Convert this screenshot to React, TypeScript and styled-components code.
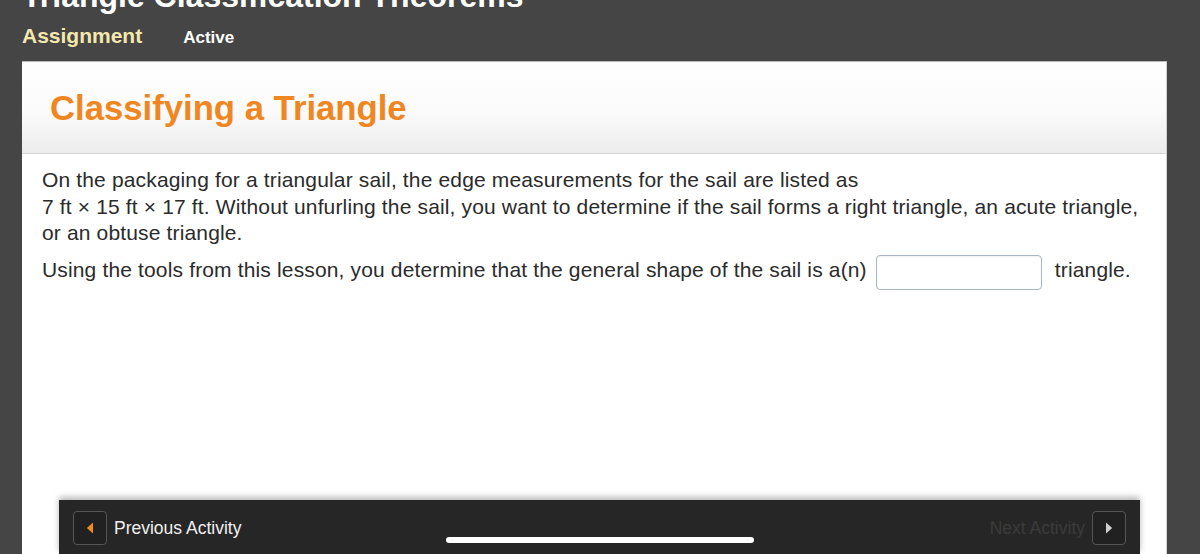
import React from "react";
import styled, { createGlobalStyle } from "styled-components";

const Global = createGlobalStyle`
  html, body { margin: 0; padding: 0; background: #454545; overflow: hidden; }
  body { font-family: "Liberation Sans", Arial, Helvetica, sans-serif; }
`;

const Page = styled.div`
  height: 100vh;
  display: flex;
  flex-direction: column;
  padding: 0 33px 0 22px;
  box-sizing: border-box;
  overflow: hidden;
`;

const PageTitle = styled.h1`
  margin: -22px 0 0 0;
  font-size: 32px;
  line-height: 36px;
  font-weight: 700;
  color: #ffffff;
  white-space: nowrap;
`;

const NavRow = styled.div`
  display: flex;
  align-items: baseline;
  gap: 41px;
  margin-top: 9px;
  height: 26px;
  margin-bottom: 12px;
`;

const NavItem = styled.span<{ $primary?: boolean }>`
  font-weight: 700;
  font-size: ${(p) => (p.$primary ? "21px" : "17px")};
  line-height: 26px;
  color: ${(p) => (p.$primary ? "#f4e8ad" : "#ffffff")};
`;

const Card = styled.section`
  flex: 1;
  display: flex;
  flex-direction: column;
  background: #ffffff;
  border-top: 1px solid #b9b9b9;
  border-right: 1px solid #d0d0d0;
  min-height: 0;
`;

const CardHeader = styled.header`
  height: 91px;
  display: flex;
  align-items: center;
  padding: 0 28px;
  background: linear-gradient(to bottom, #ffffff 0%, #fbfbfb 55%, #ececec 100%);
  border-bottom: 1px solid #d6d6d6;
  flex-shrink: 0;
`;

const CardTitle = styled.h2`
  margin: 0;
  font-size: 34.7px;
  font-weight: 700;
  color: #f0861f;
  line-height: 40px;
`;

const CardBody = styled.div`
  flex: 1;
  padding: 13px 20px 0 20px;
  color: #2b2b2b;
  font-size: 21px;
  letter-spacing: 0.15px;
  line-height: 26.5px;
`;

const Para = styled.p`
  margin: 0 0 7px 0;
`;

const AnswerBox = styled.input`
  box-sizing: border-box;
  width: 166px;
  height: 35px;
  margin: 0 13px 0 9px;
  vertical-align: middle;
  border: 1px solid #a9b6c4;
  border-radius: 4px;
  background: #ffffff;
  box-shadow: inset 0 1px 2px rgba(0, 0, 0, 0.06);
  position: relative;
  top: 1px;
`;

const BottomBar = styled.nav`
  height: 54px;
  margin: 0 26px 0 37px;
  background: #262626;
  box-shadow: 0 -3px 6px rgba(0, 0, 0, 0.28);
  display: flex;
  align-items: center;
  justify-content: space-between;
  padding: 2px 14px 0 14px;
  box-sizing: border-box;
  flex-shrink: 0;
  position: relative;
`;

const NavGroup = styled.div`
  display: flex;
  align-items: center;
  gap: 7px;
`;

const ArrowButton = styled.span`
  box-sizing: border-box;
  width: 34px;
  height: 34px;
  border: 1px solid #555555;
  border-radius: 4px;
  background: #212121;
  display: flex;
  align-items: center;
  justify-content: center;
`;

const NavLabel = styled.span<{ $dim?: boolean }>`
  font-size: 17.5px;
  color: ${(p) => (p.$dim ? "#3b3b3b" : "#f0f0f0")};
`;

const HomeIndicator = styled.div`
  position: absolute;
  left: 387px;
  bottom: 11px;
  width: 308px;
  height: 6px;
  border-radius: 3px;
  background: #ffffff;
`;

export default function App() {
  return (
    <>
      <Global />
      <Page>
        <PageTitle>Triangle Classification Theorems</PageTitle>
        <NavRow>
          <NavItem $primary>Assignment</NavItem>
          <NavItem>Active</NavItem>
        </NavRow>
        <Card>
          <CardHeader>
            <CardTitle>Classifying a Triangle</CardTitle>
          </CardHeader>
          <CardBody>
            <Para>
              On the packaging for a triangular sail, the edge measurements for the sail are listed as
              <br />
              7 ft × 15 ft × 17 ft. Without unfurling the sail, you want to determine if the sail forms a right
              triangle, an acute triangle, or an obtuse triangle.
            </Para>
            <Para>
              Using the tools from this lesson, you determine that the general shape of the sail is a(n)
              <AnswerBox type="text" aria-label="answer" />
              triangle.
            </Para>
          </CardBody>
          <BottomBar>
            <NavGroup>
              <ArrowButton>
                <svg width="8" height="12" viewBox="0 0 8 12">
                  <path d="M7 0.5 L7 11.5 L0.8 6 Z" fill="#f28a22" />
                </svg>
              </ArrowButton>
              <NavLabel>Previous Activity</NavLabel>
            </NavGroup>
            <NavGroup>
              <NavLabel $dim>Next Activity</NavLabel>
              <ArrowButton>
                <svg width="8" height="12" viewBox="0 0 8 12">
                  <path d="M1 0.5 L1 11.5 L7.2 6 Z" fill="#cfcfcf" />
                </svg>
              </ArrowButton>
            </NavGroup>
            <HomeIndicator />
          </BottomBar>
        </Card>
      </Page>
    </>
  );
}
